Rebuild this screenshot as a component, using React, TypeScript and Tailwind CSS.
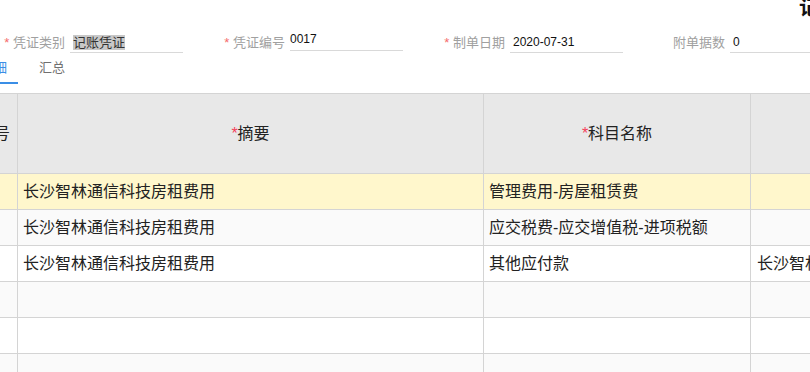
import React from "react";

const rows: { bg: string; zy: string; km: string; c4: string }[] = [
  { bg: "bg-[#fff7cc]", zy: "长沙智林通信科技房租费用", km: "管理费用-房屋租赁费", c4: "" },
  { bg: "bg-[#fafafa]", zy: "长沙智林通信科技房租费用", km: "应交税费-应交增值税-进项税额", c4: "" },
  { bg: "bg-white", zy: "长沙智林通信科技房租费用", km: "其他应付款", c4: "长沙智林通信科技房租费用" },
  { bg: "bg-[#fafafa]", zy: "", km: "", c4: "" },
  { bg: "bg-white", zy: "", km: "", c4: "" },
  { bg: "bg-[#fafafa]", zy: "", km: "", c4: "" },
];

function Label({ text, req }: { text: string; req?: boolean }) {
  return (
    <div className="w-[65px] shrink-0 text-right text-[13px] leading-[21px] text-[#a0a0a0] whitespace-nowrap">
      {req ? <span className="text-[#f56c6c]">* </span> : null}
      {text}
    </div>
  );
}

export default function App() {
  const cell = "border-r border-b border-[#d4d4d4]";
  return (
    <div className="w-[810px] h-[372px] overflow-hidden bg-white font-['Liberation_Sans','Noto_Sans_CJK_SC',sans-serif]">
      {/* title */}
      <div className="h-[28px] pl-[799px] whitespace-nowrap text-[20px] leading-[16px] font-bold text-[#111]">
        记账凭证
      </div>

      {/* fields */}
      <div className="h-[27px] pt-[4px] flex whitespace-nowrap">
        <div className="w-[220px] shrink-0 flex items-start">
          <Label text="凭证类别" req />
          <div className="ml-[5px] w-[113px] h-[21px] border-b border-[#d9d9d9] pl-[3px] flex items-center">
            <span className="inline-block h-[15px] leading-[15px] bg-[#c8c8c8] text-[13px] text-[#333]">记账凭证</span>
          </div>
        </div>
        <div className="w-[220px] shrink-0 flex items-start">
          <Label text="凭证编号" req />
          <div className="ml-[5px] w-[113px] h-[19px] border-b border-[#d9d9d9] text-[12px] leading-[14px] text-[#111]">
            0017
          </div>
        </div>
        <div className="w-[220px] shrink-0 flex items-start">
          <Label text="制单日期" req />
          <div className="ml-[5px] w-[113px] h-[21px] border-b border-[#d9d9d9] pl-[3px] text-[12px] leading-[20px] text-[#111]">
            2020-07-31
          </div>
        </div>
        <div className="w-[220px] shrink-0 flex items-start">
          <Label text="附单据数" />
          <div className="ml-[5px] w-[113px] h-[21px] border-b border-[#d9d9d9] pl-[3px] text-[12px] leading-[20px] text-[#111]">
            0
          </div>
        </div>
      </div>

      {/* tabs */}
      <div className="h-[38px]">
        <div className="ml-[-30px] flex gap-[10px] whitespace-nowrap">
          <div className="h-[29px] px-[11px] pt-[4px] text-[13px] leading-[18px] text-[#3a8ee6] border-b-2 border-[#3a8ee6]">
            明细
          </div>
          <div className="h-[29px] px-[11px] pt-[4px] text-[13px] leading-[18px] text-[#707070]">
            汇总
          </div>
        </div>
      </div>

      {/* table */}
      <div className="ml-[-29px] border-t border-[#d4d4d4] grid grid-cols-[47px_466px_267px_200px] text-[16px] text-[#222] whitespace-nowrap">
        <div className={`${cell} h-[80px] bg-[#e8e8e8] flex items-center justify-center`}>序号</div>
        <div className={`${cell} h-[80px] bg-[#e8e8e8] flex items-center justify-center`}>
          <span className="text-[#f5405a]">*</span>摘要
        </div>
        <div className={`${cell} h-[80px] bg-[#e8e8e8] flex items-center justify-center`}>
          <span className="text-[#f5405a]">*</span>科目名称
        </div>
        <div className={`${cell} h-[80px] bg-[#e8e8e8] flex items-center justify-center`}>辅助核算</div>
        {rows.map((r, i) => (
          <React.Fragment key={i}>
            <div className={`${cell} ${r.bg} h-[36px]`} />
            <div className={`${cell} ${r.bg} h-[36px] pl-[5px] flex items-center overflow-hidden`}>{r.zy}</div>
            <div className={`${cell} ${r.bg} h-[36px] pl-[5px] flex items-center overflow-hidden`}>{r.km}</div>
            <div className={`${cell} ${r.bg} h-[36px] pl-[6px] flex items-center overflow-hidden`}>{r.c4}</div>
          </React.Fragment>
        ))}
      </div>
    </div>
  );
}
